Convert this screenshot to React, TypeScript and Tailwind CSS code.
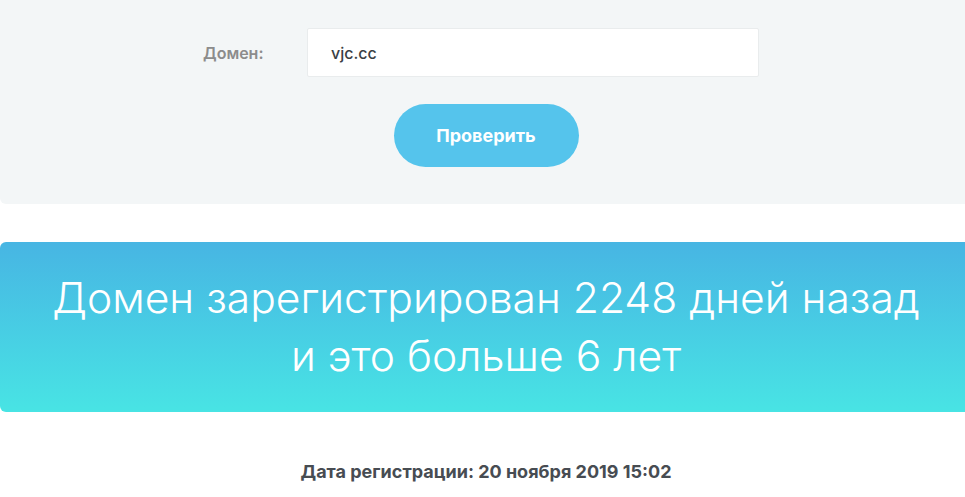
export default function App() {
  return (
    <div className="w-[965px] h-[497px] overflow-hidden bg-white" style={{ fontFamily: "Inter, 'Open Sans', sans-serif" }}>
      <div className="w-[972px]">
        {/* Form panel */}
        <div className="h-[204px] bg-[#f3f6f7] rounded-b-md pt-[28px]">
          <div className="flex items-center pl-[203px]">
            <label className="w-[104px] text-[16px] font-semibold text-[#8c8c8c]">Домен:</label>
            <div className="w-[452px] h-[49px] bg-white border border-[#e9eced] rounded-[2px] flex items-center pl-[23px] text-[16px] font-medium text-[#3a3f45]">
              vjc.cc
            </div>
          </div>
          <div className="flex justify-center mt-[27px]">
            <button className="w-[185px] h-[63px] rounded-full bg-[#55c4ec] text-white text-[18px] font-bold">
              Проверить
            </button>
          </div>
        </div>

        {/* Result banner */}
        <div className="mt-[38px] h-[170px] rounded-md bg-gradient-to-b from-[#47b5e3] to-[#48e4e4] flex items-center justify-center">
          <p className="text-center text-white text-[42.6px] font-light leading-[58px]">
            Домен зарегистрирован 2248 дней назад
            <br />
            и это больше 6 лет
          </p>
        </div>

        <p className="mt-[46px] text-center text-[18px] font-bold text-[#474c52]">
          Дата регистрации: 20 ноября 2019 15:02
        </p>
      </div>
    </div>
  );
}
